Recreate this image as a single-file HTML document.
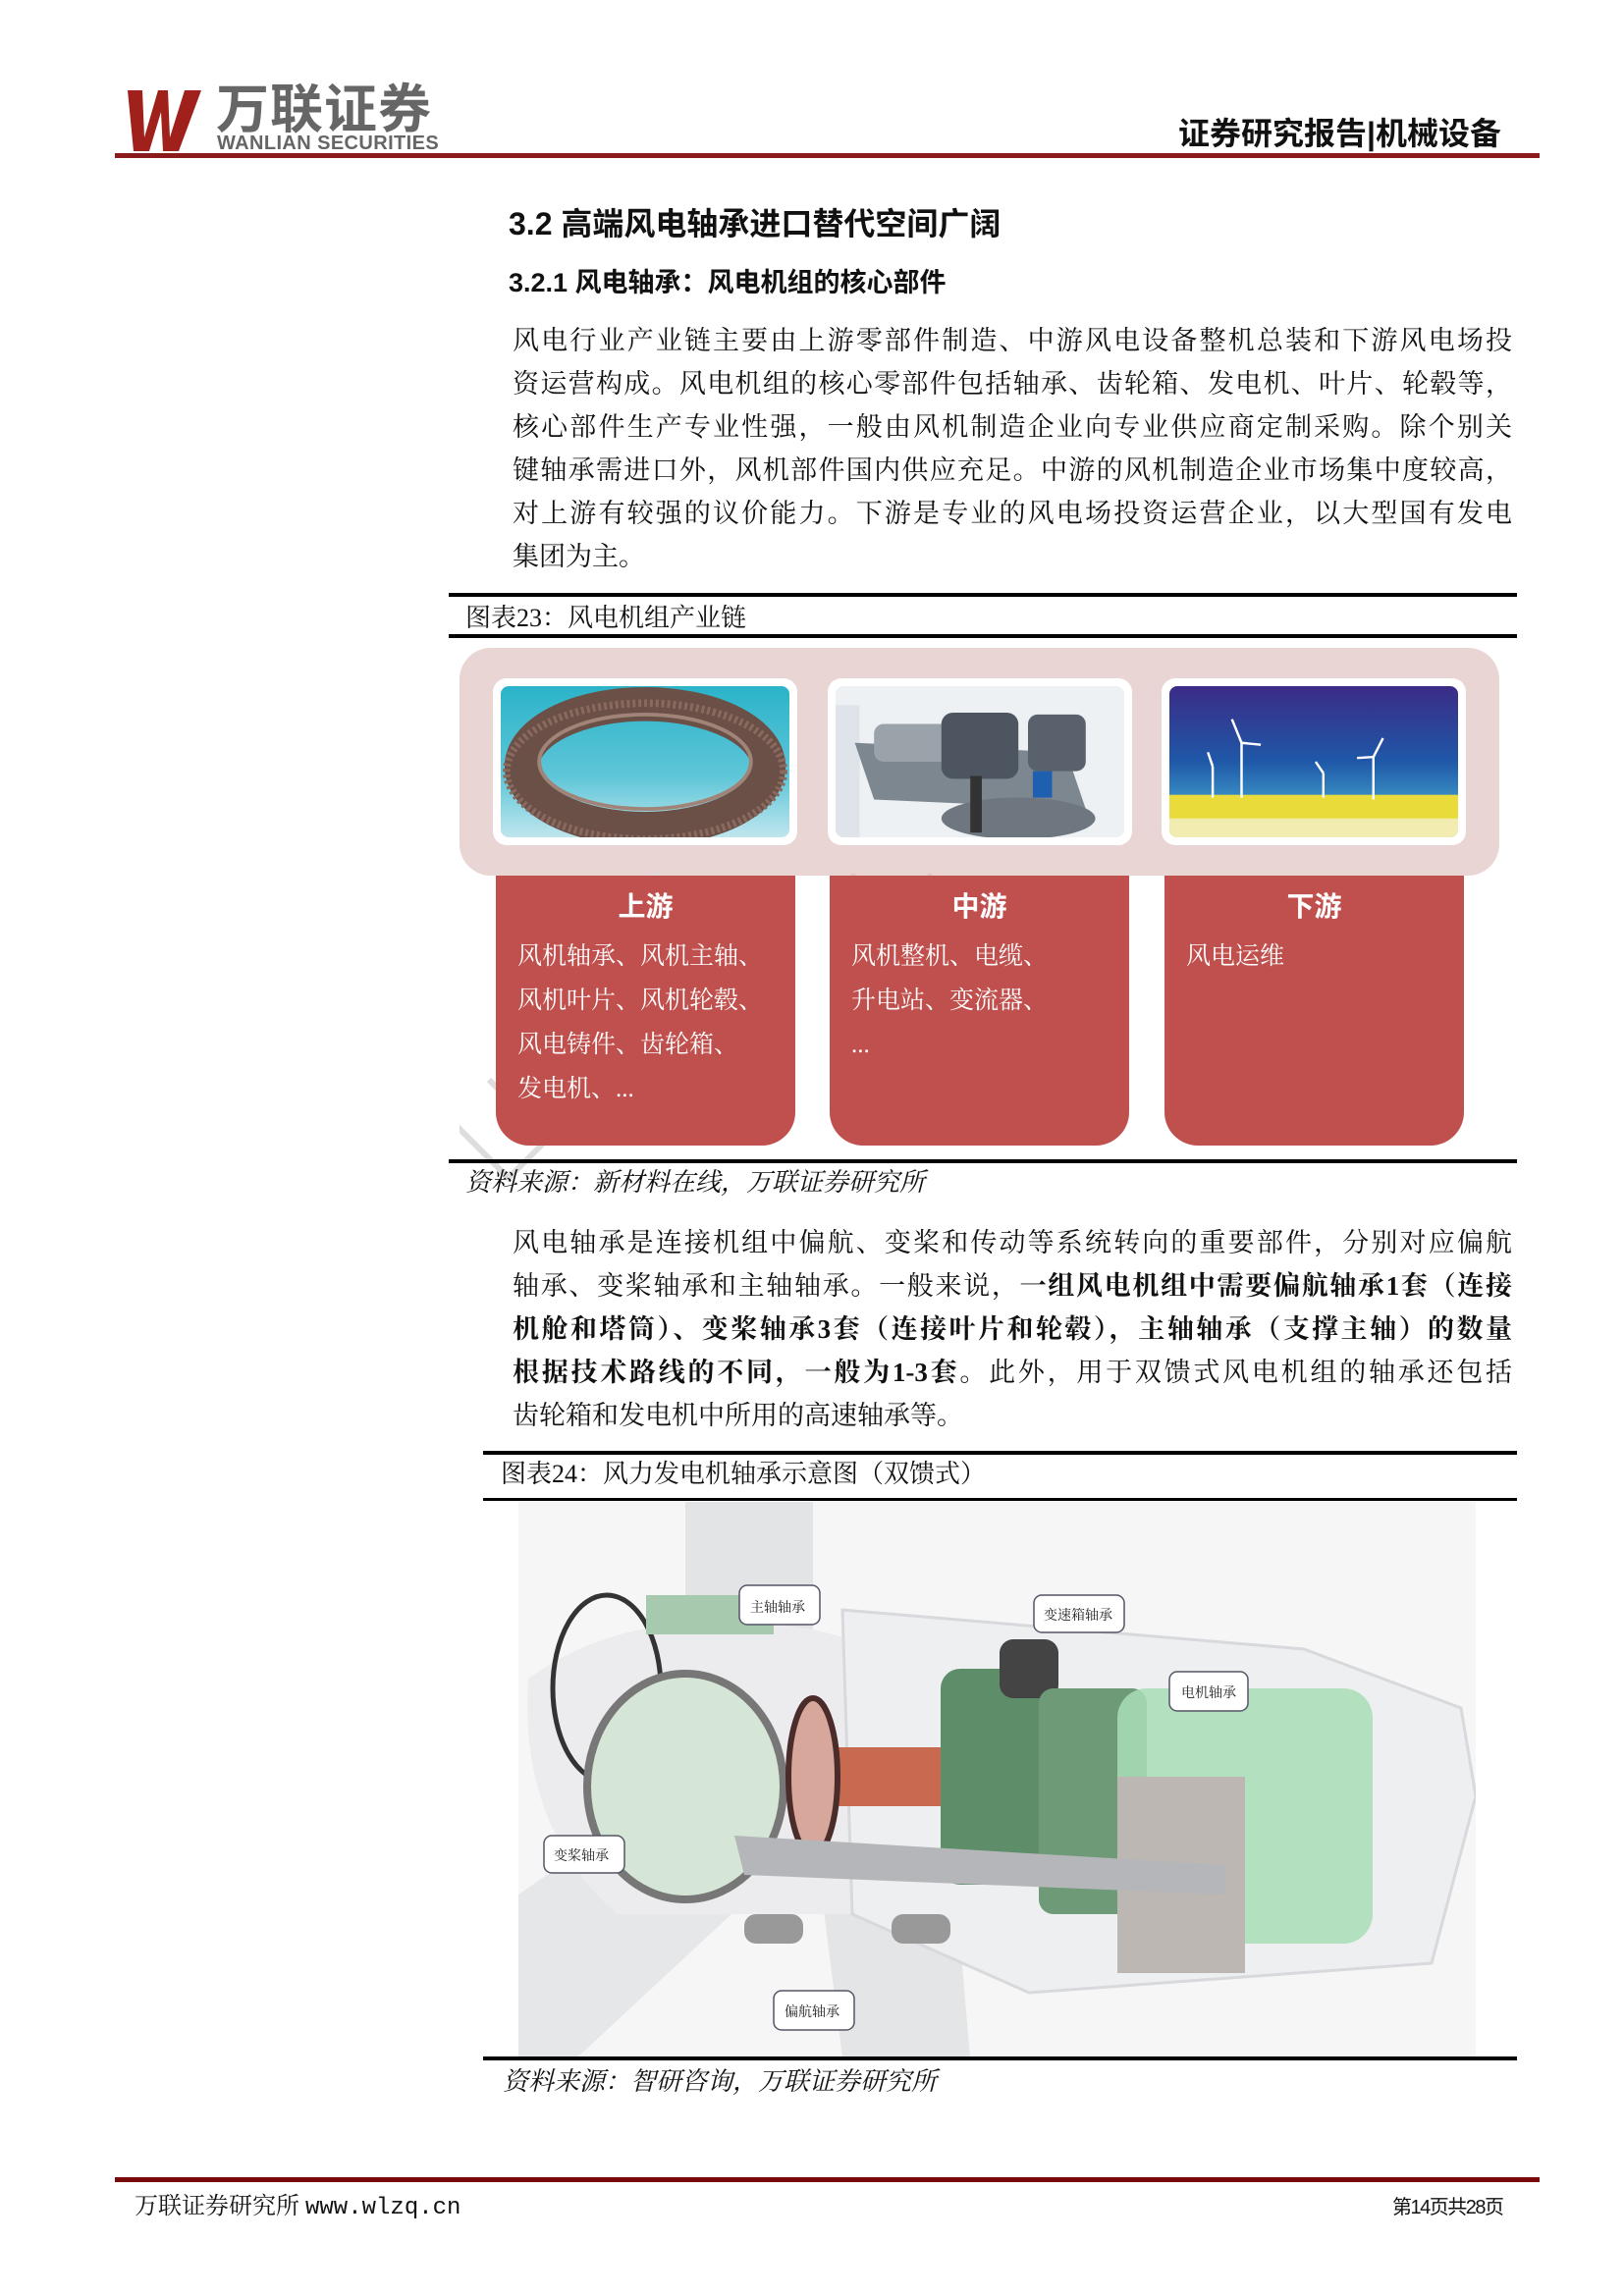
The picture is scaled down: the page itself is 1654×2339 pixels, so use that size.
<!DOCTYPE html>
<html><head><meta charset="utf-8">
<style>
*{margin:0;padding:0;box-sizing:border-box}
body{width:1654px;height:2339px;background:#fff;position:relative;overflow:hidden;font-family:"Liberation Serif","Noto Serif CJK SC",serif;color:#111}
.a{position:absolute;white-space:nowrap}
.p{position:absolute;left:522px;width:1018px;font-size:27px;line-height:44px;white-space:nowrap;text-align:justify;text-align-last:justify}
.p.l{text-align-last:left}
.h{font-family:"Liberation Sans","Noto Sans CJK SC",sans-serif;font-weight:bold}
.rl{position:absolute;background:#000}
.rb{position:absolute;top:892px;width:305px;height:275px;background:#c0504d;border-radius:0 0 34px 34px;color:#fff}
.rb .t{position:absolute;top:10px;width:100%;text-align:center;font-size:28px;font-weight:bold;font-family:"Liberation Sans","Noto Sans CJK SC",sans-serif}
.rb .i{position:absolute;left:22px;top:60px;font-size:25px;line-height:45px;white-space:nowrap}
.img{position:absolute;top:691px;width:310px;height:170px;border-radius:14px;background:#fff;padding:8px;overflow:hidden}
.img svg{width:100%;height:100%;display:block;border-radius:8px}
b{font-weight:bold}
</style></head><body>

<!-- header -->
<svg class="a" style="left:130px;top:92px" width="75" height="62" viewBox="0 0 75 62">
<polygon points="0,0 15,0 17,48 31,0 41,0 43,48 58,0 75,0 52,62 36,62 34,22 22,62 6,62" fill="#a0201c"/>
</svg>
<div class="a h" style="left:220px;top:84px;font-size:54px;color:#666;letter-spacing:1px;line-height:56px">万联证券</div>
<div class="a" style="left:221px;top:135px;font-size:20px;color:#666;font-family:'Liberation Sans',sans-serif;font-weight:bold;line-height:22px;letter-spacing:0.4px">WANLIAN SECURITIES</div>
<div class="a h" style="left:1200px;top:116px;font-size:32px;line-height:40px;color:#111">证券研究报告|机械设备</div>
<div class="a" style="left:117px;top:156px;width:1451px;height:5px;background:#8b1a1a"></div>

<div class="a h" style="left:518px;top:208px;font-size:32px;line-height:40px">3.2 高端风电轴承进口替代空间广阔</div>
<div class="a h" style="left:518px;top:270px;font-size:27px;line-height:36px">3.2.1 风电轴承：风电机组的核心部件</div>

<div class="p" style="top:325px">风电行业产业链主要由上游零部件制造、中游风电设备整机总装和下游风电场投</div>
<div class="p" style="top:369px">资运营构成。风电机组的核心零部件包括轴承、齿轮箱、发电机、叶片、轮毂等，</div>
<div class="p" style="top:413px">核心部件生产专业性强，一般由风机制造企业向专业供应商定制采购。除个别关</div>
<div class="p" style="top:457px">键轴承需进口外，风机部件国内供应充足。中游的风机制造企业市场集中度较高，</div>
<div class="p" style="top:501px">对上游有较强的议价能力。下游是专业的风电场投资运营企业，以大型国有发电</div>
<div class="p l" style="top:545px">集团为主。</div>

<!-- fig 23 -->
<div class="rl" style="left:457px;top:604px;width:1088px;height:4px"></div>
<div class="a" style="left:474px;top:612px;font-size:26px;line-height:36px">图表23：风电机组产业链</div>
<div class="rl" style="left:457px;top:646px;width:1088px;height:4px"></div>

<div class="a" style="left:468px;top:660px;width:1059px;height:232px;background:#ead5d5;border-radius:32px"></div>
<svg class="a" style="left:468px;top:660px" width="1059" height="560" viewBox="0 0 1059 560">
<polyline points="-20,470 50,540 90,500 30,440" fill="none" stroke="#ddd" stroke-width="6"/>
<polyline points="200,230 250,310 280,260" fill="none" stroke="#ddd" stroke-width="6"/>
<polyline points="400,230 440,300 480,230" fill="none" stroke="#e0c8c8" stroke-width="5"/>
</svg>

<div class="img" style="left:502px">
<svg viewBox="0 0 300 160" preserveAspectRatio="none">
<defs><linearGradient id="cy" x1="0" y1="0" x2="0" y2="1"><stop offset="0" stop-color="#2bb3c9"/><stop offset="0.6" stop-color="#5fc6d8"/><stop offset="1" stop-color="#bfe6ee"/></linearGradient></defs>
<rect width="300" height="160" fill="url(#cy)"/>
<ellipse cx="150" cy="85" rx="128" ry="66" fill="none" stroke="#6b5048" stroke-width="36"/>
<ellipse cx="150" cy="90" rx="144" ry="72" fill="none" stroke="#8a6a5e" stroke-width="8" stroke-dasharray="3 3"/>
<ellipse cx="150" cy="80" rx="110" ry="50" fill="none" stroke="#a08478" stroke-width="4"/>
</svg></div>
<div class="img" style="left:843px">
<svg viewBox="0 0 300 160" preserveAspectRatio="none">
<rect width="300" height="160" fill="#eef1f4"/>
<rect x="0" y="20" width="25" height="140" fill="#dfe4ea"/>
<polygon points="20,60 240,70 260,130 40,120" fill="#7d8790"/>
<rect x="40" y="40" width="80" height="40" rx="10" fill="#9aa2aa"/>
<rect x="110" y="28" width="80" height="70" rx="12" fill="#4d5660"/>
<rect x="200" y="30" width="60" height="60" rx="10" fill="#59626c"/>
<rect x="205" y="90" width="20" height="28" fill="#1f5fb0"/>
<ellipse cx="190" cy="140" rx="80" ry="22" fill="#6e7780"/>
<rect x="140" y="95" width="12" height="60" fill="#333"/>
</svg></div>
<div class="img" style="left:1183px">
<svg viewBox="0 0 300 160" preserveAspectRatio="none">
<defs><linearGradient id="sk" x1="0" y1="0" x2="0" y2="1"><stop offset="0" stop-color="#3b2b86"/><stop offset="0.5" stop-color="#1f58a8"/><stop offset="0.75" stop-color="#3a8fc4"/></linearGradient></defs>
<rect width="300" height="160" fill="url(#sk)"/>
<rect y="115" width="300" height="45" fill="#e9dc3a"/>
<rect y="140" width="300" height="20" fill="#f3ecb0"/>
<g stroke="#fff" stroke-width="2.5" fill="none">
<line x1="75" y1="60" x2="75" y2="118"/><line x1="75" y1="60" x2="65" y2="35"/><line x1="75" y1="60" x2="95" y2="62"/>
<line x1="45" y1="85" x2="45" y2="118"/><line x1="45" y1="85" x2="40" y2="70"/>
<line x1="160" y1="92" x2="160" y2="118"/><line x1="160" y1="92" x2="152" y2="80"/>
<line x1="212" y1="75" x2="212" y2="120"/><line x1="212" y1="75" x2="222" y2="55"/><line x1="212" y1="75" x2="195" y2="76"/>
</g></svg></div>

<div class="rb" style="left:505px"><div class="t">上游</div><div class="i">风机轴承、风机主轴、<br>风机叶片、风机轮毂、<br>风电铸件、齿轮箱、<br>发电机、...</div></div>
<div class="rb" style="left:845px"><div class="t">中游</div><div class="i">风机整机、电缆、<br>升电站、变流器、<br>...</div></div>
<div class="rb" style="left:1186px"><div class="t">下游</div><div class="i">风电运维</div></div>

<div class="rl" style="left:457px;top:1181px;width:1088px;height:4px"></div>
<div class="a" style="left:474px;top:1188px;font-size:26px;line-height:34px;font-style:italic">资料来源：新材料在线，万联证券研究所</div>

<div class="p" style="top:1244px">风电轴承是连接机组中偏航、变桨和传动等系统转向的重要部件，分别对应偏航</div>
<div class="p" style="top:1288px">轴承、变桨轴承和主轴轴承。一般来说，<b>一组风电机组中需要偏航轴承1套（连接</b></div>
<div class="p" style="top:1332px"><b>机舱和塔筒）、变桨轴承3套（连接叶片和轮毂），主轴轴承（支撑主轴）的数量</b></div>
<div class="p" style="top:1376px"><b>根据技术路线的不同，一般为1-3套</b>。此外，用于双馈式风电机组的轴承还包括</div>
<div class="p l" style="top:1420px">齿轮箱和发电机中所用的高速轴承等。</div>

<!-- fig 24 -->
<div class="rl" style="left:492px;top:1478px;width:1053px;height:4px"></div>
<div class="a" style="left:510px;top:1484px;font-size:26px;line-height:36px">图表24：风力发电机轴承示意图（双馈式）</div>
<div class="rl" style="left:492px;top:1526px;width:1053px;height:3px"></div>

<svg class="a" style="left:528px;top:1530px" width="975" height="566" viewBox="0 0 975 566">
<rect width="975" height="566" fill="#f6f6f7"/>
<path d="M170,0 L300,0 L300,170 L170,170 Z" fill="#e3e4e6"/>
<path d="M0,400 L160,290 L260,380 L60,566 L0,566 Z" fill="#e6e7e9"/>
<path d="M300,330 L440,330 L460,566 L330,566 Z" fill="#e4e5e7"/>
<path d="M10,180 Q120,100 300,130 L380,150 L380,420 L100,420 Q0,330 10,180Z" fill="#ececee"/>
<path d="M330,110 L800,150 L960,210 L975,300 L930,470 L520,500 L340,420 Z" fill="#eeeff1" stroke="#d8d9dc" stroke-width="3"/>
<ellipse cx="90" cy="190" rx="55" ry="95" fill="none" stroke="#333" stroke-width="5"/>
<ellipse cx="170" cy="290" rx="100" ry="115" fill="#d6e6d6" stroke="#777" stroke-width="8"/>
<rect x="130" y="95" width="130" height="40" fill="#a7c9ad"/>
<rect x="300" y="250" width="140" height="60" rx="8" fill="#c76a50"/>
<ellipse cx="300" cy="280" rx="25" ry="80" fill="#d7a79c" stroke="#4a2d2a" stroke-width="6"/>
<rect x="430" y="170" width="120" height="220" rx="20" fill="#5e8d69"/>
<rect x="490" y="140" width="60" height="60" rx="14" fill="#444"/>
<rect x="530" y="190" width="110" height="230" rx="15" fill="#6f9a77"/>
<rect x="610" y="190" width="260" height="260" rx="30" fill="#a8deb7" opacity="0.85"/>
<rect x="610" y="280" width="130" height="200" fill="#bdb7b4"/>
<polygon points="220,340 720,370 720,400 230,380" fill="#b4b6b9"/>
<rect x="230" y="420" width="60" height="30" rx="12" fill="#999"/>
<rect x="380" y="420" width="60" height="30" rx="12" fill="#999"/>
<g font-size="14" font-family="Noto Serif CJK SC,serif" fill="#222">
<rect x="225" y="85" width="82" height="40" rx="8" fill="#fff" stroke="#556" stroke-width="1.5"/><text x="236" y="112">主轴轴承</text>
<rect x="525" y="95" width="92" height="38" rx="8" fill="#fff" stroke="#556" stroke-width="1.5"/><text x="535" y="120">变速箱轴承</text>
<rect x="663" y="173" width="80" height="40" rx="8" fill="#fff" stroke="#556" stroke-width="1.5"/><text x="675" y="199">电机轴承</text>
<rect x="26" y="340" width="82" height="38" rx="8" fill="#fff" stroke="#556" stroke-width="1.5"/><text x="36" y="365">变桨轴承</text>
<rect x="260" y="498" width="82" height="40" rx="8" fill="#fff" stroke="#556" stroke-width="1.5"/><text x="271" y="524">偏航轴承</text>
</g>
</svg>

<div class="rl" style="left:492px;top:2095px;width:1053px;height:4px"></div>
<div class="a" style="left:512px;top:2104px;font-size:26px;line-height:34px;font-style:italic">资料来源：智研咨询，万联证券研究所</div>

<!-- footer -->
<div class="a" style="left:117px;top:2218px;width:1451px;height:5px;background:#7a0a0a"></div>
<div class="a" style="left:137px;top:2232px;font-size:24px;line-height:32px">万联证券研究所 <span style="font-family:'Liberation Mono',monospace">www.wlzq.cn</span></div>
<div class="a" style="left:1418px;top:2236px;font-size:20px;line-height:26px;font-family:'Liberation Sans','Noto Sans CJK SC',sans-serif;letter-spacing:-1.5px">第14页共28页</div>
</body></html>
